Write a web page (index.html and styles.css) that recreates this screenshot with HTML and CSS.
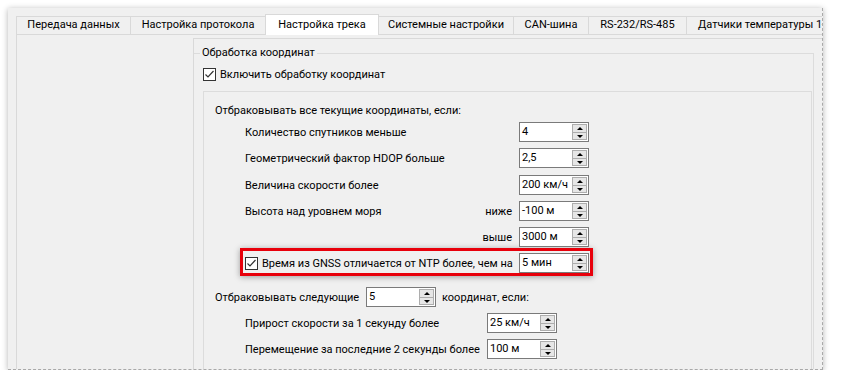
FILE: index.html
```html
<!DOCTYPE html>
<html lang="ru">
<head>
    <meta charset="UTF-8">
    <title>Настройка трека</title>
    <link rel="stylesheet" href="styles.css">
</head>
<body>
    <div class="window">
        <div class="tabs">
            <div class="tab w1">Передача данных</div>
            <div class="tab w2">Настройка протокола</div>
            <div class="tab w3 active">Настройка трека</div>
            <div class="tab w2">Системные настройки</div>
            <div class="tab w5">CAN-шина</div>
            <div class="tab w6">RS-232/RS-485</div>
            <div class="tab w7">Датчики температуры 1-8</div>
        </div>

        <div class="pane">
            <div class="side"></div>
            <div class="scroll">
                <fieldset class="group">
                    <legend>Обработка координат</legend>
                    <label class="check">
                        <span class="box"><svg width="13" height="13" viewBox="0 0 13 13"><polyline points="2.5,6.5 5,9 10.5,3" fill="none" stroke="#333" stroke-width="1.2"/></svg></span>
                        Включить обработку координат
                    </label>

                    <div class="frame">
                        <div class="head">Отбраковывать все текущие координаты, если:</div>

                        <div class="row">
                            <span class="label">Количество спутников меньше</span>
                            <div class="spin"><span class="val">4</span><span class="btns"><i class="up"></i><i class="down"></i></span></div>
                        </div>
                        <div class="row">
                            <span class="label">Геометрический фактор HDOP больше</span>
                            <div class="spin"><span class="val">2,5</span><span class="btns"><i class="up"></i><i class="down"></i></span></div>
                        </div>
                        <div class="row tall">
                            <span class="label">Величина скорости более</span>
                            <div class="spin"><span class="val">200 км/ч</span><span class="btns"><i class="up"></i><i class="down"></i></span></div>
                        </div>
                        <div class="row">
                            <span class="label">Высота над уровнем моря</span>
                            <span class="sub">ниже</span>
                            <div class="spin"><span class="val">-100 м</span><span class="btns"><i class="up"></i><i class="down"></i></span></div>
                        </div>
                        <div class="row">
                            <span class="label"></span>
                            <span class="sub">выше</span>
                            <div class="spin"><span class="val">3000 м</span><span class="btns"><i class="up"></i><i class="down"></i></span></div>
                        </div>

                        <div class="row marked">
                            <label class="check label">
                                <span class="box"><svg width="13" height="13" viewBox="0 0 13 13"><polyline points="2.5,6.5 5,9 10.5,3" fill="none" stroke="#333" stroke-width="1.2"/></svg></span>
                                Время из GNSS отличается от NTP более, чем на
                            </label>
                            <div class="spin"><span class="val">5 мин</span><span class="btns"><i class="up"></i><i class="down"></i></span></div>
                        </div>

                        <div class="row next">
                            <span class="lead">Отбраковывать следующие</span>
                            <div class="spin"><span class="val">5</span><span class="btns"><i class="up"></i><i class="down"></i></span></div>
                            <span class="tail">координат, если:</span>
                        </div>
                        <div class="row short">
                            <span class="label">Прирост скорости за 1 секунду более</span>
                            <div class="spin"><span class="val">25 км/ч</span><span class="btns"><i class="up"></i><i class="down"></i></span></div>
                        </div>
                        <div class="row short">
                            <span class="label">Перемещение за последние 2 секунды более</span>
                            <div class="spin"><span class="val">100 м</span><span class="btns"><i class="up"></i><i class="down"></i></span></div>
                        </div>
                    </div>
                </fieldset>
            </div>
        </div>
    </div>
</body>
</html>
```

FILE: styles.css
```css
* {
    margin: 0;
    padding: 0;
    box-sizing: border-box;
}

body {
    background: #fff;
    font-family: Roboto, 'Liberation Sans', sans-serif;
    font-size: 11px;
    color: #000;
    white-space: nowrap;
}

.window {
    margin: 8px 0 0 8px;
    width: 815px;
    height: 362px;
    background: #f0f0f0;
    overflow: hidden;
    border-right: 1px dashed #a9a9a9;
    border-bottom: 1px dashed #a9a9a9;
    box-shadow: 0 1px 6px rgba(0, 0, 0, 0.3);
}

/* tab bar */
.tabs {
    display: flex;
    align-items: flex-end;
    height: 26px;
    padding-left: 8px;
}

.tab {
    flex: none;
    height: 18px;
    line-height: 16px;
    text-align: center;
    background: #f0f0f0;
    border: 1px solid #d9d9d9;
    border-bottom: 0;
    margin-left: -1px;
}

.tab:first-child {
    margin-left: 0;
}

.tab.active {
    height: 21px;
    padding-top: 2px;
    margin-bottom: -1px;
    background: #fff;
    position: relative;
    z-index: 1;
}

.w1 { width: 115px; }
.w2 { width: 136px; }
.w3 { width: 114px; }
.w5 { width: 76px; }
.w6 { width: 99px; }
.w7 { width: 170px; text-align: left; padding-left: 11px; }

/* page */
.pane {
    display: flex;
    margin-left: 8px;
    padding-top: 3px;
    height: 400px;
    border-top: 1px solid #d9d9d9;
    border-left: 1px solid #d9d9d9;
}

.side {
    width: 176px;
    flex: none;
}

.scroll {
    flex: 1;
    border-top: 1px solid #d9d9d9;
    border-left: 1px solid #d9d9d9;
}

.group {
    margin-top: 6px;
    width: 620px;
    padding: 0 1px 0 6px;
    border: 1px solid #dcdcdc;
    border-left: 0;
}

.group legend {
    padding: 0 2px;
    line-height: 16px;
}

.check {
    display: flex;
    align-items: center;
    gap: 4px;
    height: 17px;
}

.group > .check {
    margin: 5px 0 0 3px;
}

.box {
    display: block;
    width: 13px;
    height: 13px;
    background: #fff;
    border: 1px solid #333;
}

.box svg {
    display: block;
    margin: -1px 0 0 -1px;
}

.frame {
    margin: 8px 0 0 3px;
    padding: 11px 0 40px 11px;
    border: 1px solid #dcdcdc;
}

.head {
    line-height: 16px;
    margin-bottom: 3px;
}

/* rows with spin boxes */
.row {
    display: flex;
    align-items: center;
    width: 344px;
    margin: 6px 0 0 30px;
}

.frame .head + .row {
    margin-top: 0;
}

.row.tall {
    margin-top: 7px;
}

.row .label {
    flex: 1;
    min-width: 0;
}

.row .sub {
    margin-right: 7px;
}

.row.marked {
    width: 353px;
    margin: 1px 0 0 25px;
    padding: 2px 1px 0 2px;
    border: 3px solid #e8000b;
    box-shadow: 0 1px 6px rgba(0, 0, 0, 0.35);
}

.row.next {
    width: auto;
    margin: 11px 0 0 0;
}

.row.next .lead {
    width: 151px;
    flex: none;
}

.row.next .tail {
    margin-left: 6px;
}

.row.short {
    width: 312px;
}

.spin {
    display: flex;
    width: 70px;
    height: 20px;
    flex: none;
    background: #fff;
    border: 1px solid #7a7a7a;
}

.spin .val {
    flex: 1;
    padding-left: 2px;
    line-height: 18px;
}

.spin .btns {
    display: flex;
    flex-direction: column;
    width: 15px;
    margin: 1px 1px 1px 0;
    border: 1px solid #adadad;
    background: #e6e6e6;
}

.spin i {
    flex: 1;
    position: relative;
}

.spin i.up {
    border-bottom: 1px solid #adadad;
}

.spin i::after {
    content: "";
    position: absolute;
    left: 4px;
    top: 2px;
    border-left: 3px solid transparent;
    border-right: 3px solid transparent;
}

.spin i.up::after {
    border-bottom: 3px solid #000;
}

.spin i.down::after {
    top: 2px;
    border-top: 3px solid #000;
}
```
